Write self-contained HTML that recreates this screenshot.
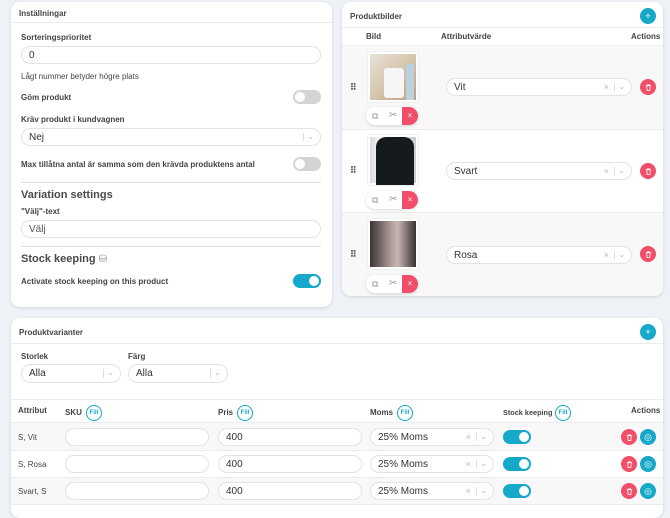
<!DOCTYPE html>
<html><head><meta charset="utf-8"><style>
*{box-sizing:border-box;margin:0;padding:0}
body{width:670px;height:506px;overflow:hidden;background:#eef1f6;font-family:"Liberation Sans",sans-serif;color:#333;position:relative}
.a{position:absolute}
.card{position:absolute;background:#fff;border-radius:9px;box-shadow:0 1px 3px rgba(0,0,0,.12)}
.t{position:absolute;font-size:8px;font-weight:bold;color:#444;white-space:nowrap}
.n{position:absolute;font-size:8px;color:#444;white-space:nowrap}
.in{position:absolute;border:1px solid #e3e3e3;border-radius:10px;background:#fff;font-size:10px;color:#333;padding-left:7px;display:flex;align-items:center}
.tog{position:absolute;width:28px;height:14px;border-radius:7px;background:#d4d4d4}
.tog::after{content:"";position:absolute;left:2px;top:2px;width:10px;height:10px;border-radius:50%;background:#fff}
.tog.on{background:#15a8c8}
.tog.on::after{left:16px}
.line{position:absolute;height:1px;background:#ececec}
.circ{position:absolute;width:16px;height:16px;border-radius:50%;display:flex;align-items:center;justify-content:center;color:#fff;font-size:9px}
.red{background:#f04e69}.teal{background:#15a8c8}
.sel .x{position:absolute;right:22px;color:#bbb;font-size:9px}
.sel .d{position:absolute;right:16px;top:4px;bottom:4px;width:1px;background:#ddd}
.sel .c{position:absolute;right:6px;top:3px;color:#bbb;font-size:8px}
.fill{position:absolute;width:16px;height:16px;border-radius:50%;border:1px solid #15a8c8;color:#15a8c8;font-size:6px;font-weight:bold;display:flex;align-items:center;justify-content:center}
.shade{position:absolute;background:#f8f8f8}
.tb{position:absolute;width:52px;height:18px;border-radius:9px;background:#fff;box-shadow:0 1px 3px rgba(0,0,0,.15);overflow:hidden}
.tb .r{position:absolute;right:0;top:0;width:16px;height:18px;background:#f04e69;color:#fff;font-size:8px;text-align:center;line-height:18px}
.tb .i1{position:absolute;left:6px;top:4px;font-size:9px;color:#999}
.tb .i2{position:absolute;left:23px;top:3px;font-size:10px;color:#999}
.img{position:absolute;width:52px;height:52px;border:1px solid #eee;border-radius:3px;padding:2px;background:#fff}
.grip{position:absolute;font-size:9px;color:#555;font-weight:bold}
</style></head><body>
<svg width="0" height="0" style="position:absolute"><defs><symbol id="tr" viewBox="0 0 10 10"><path d="M2 3h6M4 3V2h2v1M3 3l.5 5.5h3L7 3" fill="none" stroke="#fff" stroke-width="0.9"/></symbol></defs></svg>

<!-- Left card -->
<div class="card" style="left:11px;top:2px;width:321px;height:305px"></div>
<div class="t" style="left:19px;top:9px">Inställningar</div>
<div class="line" style="left:11px;top:22px;width:321px"></div>
<div class="t" style="left:21px;top:33px">Sorteringsprioritet</div>
<div class="in" style="left:21px;top:46px;width:300px;height:18px">0</div>
<div class="n" style="left:21px;top:72px">Lågt nummer betyder högre plats</div>
<div class="t" style="left:21px;top:93px">Göm produkt</div>
<div class="tog" style="left:293px;top:90px"></div>
<div class="t" style="left:21px;top:115px">Kräv produkt i kundvagnen</div>
<div class="in sel" style="left:21px;top:128px;width:300px;height:18px">Nej<span class="d"></span><span class="c">⌄</span></div>
<div class="t" style="left:21px;top:160px">Max tillåtna antal är samma som den krävda produktens antal</div>
<div class="tog" style="left:293px;top:157px"></div>
<div class="line" style="left:21px;top:182px;width:300px;background:#e2e2e2"></div>
<div class="a" style="left:21px;top:189px;font-size:11px;font-weight:bold;color:#4a4a4a">Variation settings</div>
<div class="t" style="left:21px;top:207px">"Välj"-text</div>
<div class="in" style="left:21px;top:220px;width:300px;height:18px;color:#555">Välj</div>
<div class="line" style="left:21px;top:246px;width:300px;background:#e2e2e2"></div>
<div class="a" style="left:21px;top:253px;font-size:11px;font-weight:bold;color:#4a4a4a">Stock keeping <span style="font-weight:normal;color:#888;font-size:10px">⛁</span></div>
<div class="t" style="left:21px;top:277px">Activate stock keeping on this product</div>
<div class="tog on" style="left:293px;top:274px"></div>

<!-- Right card -->
<div class="card" style="left:342px;top:2px;width:321px;height:294px;overflow:hidden">
 <div class="shade" style="left:0;top:43px;width:321px;height:84px"></div>
 <div class="shade" style="left:0;top:210px;width:321px;height:84px"></div>
</div>
<div class="t" style="left:350px;top:12px">Produktbilder</div>
<div class="circ teal" style="left:640px;top:8px">+</div>
<div class="line" style="left:342px;top:27px;width:321px"></div>
<div class="t" style="left:366px;top:32px">Bild</div>
<div class="t" style="left:441px;top:32px">Attributvärde</div>
<div class="t" style="left:631px;top:32px">Actions</div>
<div class="line" style="left:342px;top:45px;width:321px"></div>
<div class="line" style="left:342px;top:129px;width:321px"></div>
<div class="line" style="left:342px;top:212px;width:321px"></div>

<div class="grip" style="left:350px;top:82px">⠿</div>
<div class="img" style="left:367px;top:51px"><div style="width:100%;height:100%;background:linear-gradient(135deg,#e8e2d8,#d6c6ae 50%,#b8a080);position:relative"><div style="position:absolute;left:14px;top:14px;width:20px;height:30px;background:#f6f6f8;border-radius:3px"></div><div style="position:absolute;left:36px;top:10px;width:8px;height:36px;background:#bcd0de"></div></div></div>
<div class="tb" style="left:366px;top:107px"><span class="i1">⧉</span><span class="i2">✂</span><span class="r">×</span></div>
<div class="in sel" style="left:446px;top:78px;width:186px;height:18px">Vit<span class="x">×</span><span class="d"></span><span class="c">⌄</span></div>
<div class="circ red" style="left:640px;top:79px"><svg width="9" height="9"><use href="#tr"/></svg></div>

<div class="grip" style="left:350px;top:165px">⠿</div>
<div class="img" style="left:367px;top:134px"><div style="width:100%;height:100%;background:linear-gradient(90deg,#ddd,#fff 30%,#ccc);position:relative"><div style="position:absolute;left:6px;top:0;width:38px;height:48px;background:#151a1c;border-radius:10px 10px 0 0"></div></div></div>
<div class="tb" style="left:366px;top:191px"><span class="i1">⧉</span><span class="i2">✂</span><span class="r">×</span></div>
<div class="in sel" style="left:446px;top:162px;width:186px;height:18px">Svart<span class="x">×</span><span class="d"></span><span class="c">⌄</span></div>
<div class="circ red" style="left:640px;top:163px"><svg width="9" height="9"><use href="#tr"/></svg></div>

<div class="grip" style="left:350px;top:249px">⠿</div>
<div class="img" style="left:367px;top:218px"><div style="width:100%;height:100%;background:linear-gradient(90deg,#3a3434,#a08f8c 40%,#c8b8b4 60%,#3a3030);position:relative"></div></div>
<div class="tb" style="left:366px;top:275px"><span class="i1">⧉</span><span class="i2">✂</span><span class="r">×</span></div>
<div class="in sel" style="left:446px;top:246px;width:186px;height:18px">Rosa<span class="x">×</span><span class="d"></span><span class="c">⌄</span></div>
<div class="circ red" style="left:640px;top:246px"><svg width="9" height="9"><use href="#tr"/></svg></div>

<!-- Bottom card -->
<div class="card" style="left:11px;top:318px;width:652px;height:200px;overflow:hidden">
 <div class="shade" style="left:0;top:105px;width:652px;height:27px"></div>
 <div class="shade" style="left:0;top:159px;width:652px;height:27px"></div>
</div>
<div class="t" style="left:19px;top:328px">Produktvarianter</div>
<div class="circ teal" style="left:640px;top:324px">+</div>
<div class="line" style="left:11px;top:343px;width:652px"></div>
<div class="t" style="left:21px;top:352px">Storlek</div>
<div class="t" style="left:128px;top:352px">Färg</div>
<div class="in sel" style="left:21px;top:364px;width:100px;height:19px">Alla<span class="d"></span><span class="c">⌄</span></div>
<div class="in sel" style="left:128px;top:364px;width:100px;height:19px">Alla<span class="d"></span><span class="c">⌄</span></div>
<div class="line" style="left:11px;top:399px;width:652px"></div>
<div class="t" style="left:18px;top:406px">Attribut</div>
<div class="t" style="left:65px;top:408px">SKU</div><div class="fill" style="left:86px;top:405px">Fill</div>
<div class="t" style="left:218px;top:408px">Pris</div><div class="fill" style="left:237px;top:405px">Fill</div>
<div class="t" style="left:370px;top:408px">Moms</div><div class="fill" style="left:397px;top:405px">Fill</div>
<div class="t" style="left:503px;top:408px;font-size:7.3px">Stock keeping</div><div class="fill" style="left:555px;top:405px">Fill</div>
<div class="t" style="left:631px;top:406px">Actions</div>
<div class="line" style="left:11px;top:422px;width:652px"></div>
<div class="line" style="left:11px;top:450px;width:652px"></div>
<div class="line" style="left:11px;top:477px;width:652px"></div>
<div class="line" style="left:11px;top:504px;width:652px"></div>

<div class="n" style="left:18px;top:433px">S, Vit</div>
<div class="in" style="left:65px;top:428px;width:144px;height:18px"></div>
<div class="in" style="left:218px;top:428px;width:144px;height:18px">400</div>
<div class="in sel" style="left:370px;top:428px;width:124px;height:18px">25% Moms<span class="x">×</span><span class="d"></span><span class="c">⌄</span></div>
<div class="tog on" style="left:503px;top:430px"></div>
<div class="circ red" style="left:621px;top:429px"><svg width="9" height="9"><use href="#tr"/></svg></div><div class="circ teal" style="left:640px;top:429px">◎</div>

<div class="n" style="left:18px;top:460px">S, Rosa</div>
<div class="in" style="left:65px;top:455px;width:144px;height:18px"></div>
<div class="in" style="left:218px;top:455px;width:144px;height:18px">400</div>
<div class="in sel" style="left:370px;top:455px;width:124px;height:18px">25% Moms<span class="x">×</span><span class="d"></span><span class="c">⌄</span></div>
<div class="tog on" style="left:503px;top:457px"></div>
<div class="circ red" style="left:621px;top:456px"><svg width="9" height="9"><use href="#tr"/></svg></div><div class="circ teal" style="left:640px;top:456px">◎</div>

<div class="n" style="left:18px;top:487px">Svart, S</div>
<div class="in" style="left:65px;top:482px;width:144px;height:18px"></div>
<div class="in" style="left:218px;top:482px;width:144px;height:18px">400</div>
<div class="in sel" style="left:370px;top:482px;width:124px;height:18px">25% Moms<span class="x">×</span><span class="d"></span><span class="c">⌄</span></div>
<div class="tog on" style="left:503px;top:484px"></div>
<div class="circ red" style="left:621px;top:483px"><svg width="9" height="9"><use href="#tr"/></svg></div><div class="circ teal" style="left:640px;top:483px">◎</div>
</body></html>
